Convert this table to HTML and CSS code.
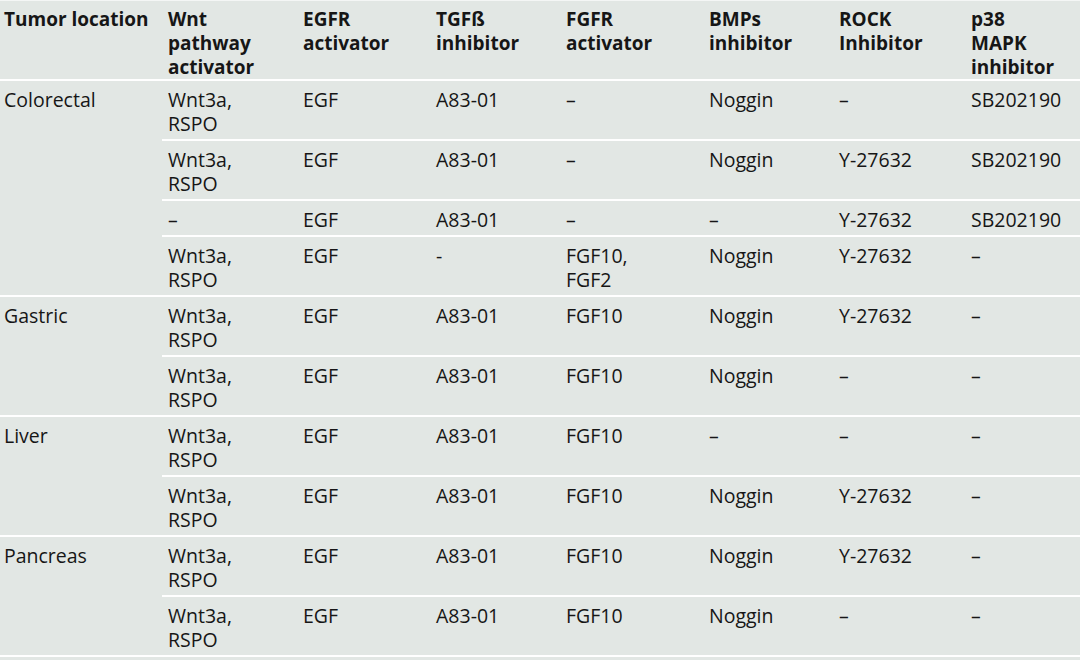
FILE: index.html
```html
<!DOCTYPE html>
<html>
<head>
<meta charset="utf-8">
<link rel="stylesheet" href="styles.css">
</head>
<body>
<table class="grid">
  <colgroup>
    <col class="c1"><col class="c2"><col class="c3"><col class="c4"><col class="c5"><col class="c6"><col class="c7"><col class="c8">
  </colgroup>
  <thead>
    <tr>
      <th class="first">Tumor location</th>
      <th>Wnt<br>pathway<br>activator</th>
      <th>EGFR<br>activator</th>
      <th>TGFß<br>inhibitor</th>
      <th>FGFR<br>activator</th>
      <th>BMPs<br>inhibitor</th>
      <th>ROCK<br>Inhibitor</th>
      <th>p38<br>MAPK<br>inhibitor</th>
    </tr>
  </thead>
  <tbody>
    <tr>
      <td class="first" rowspan="4">Colorectal</td>
      <td>Wnt3a,<br>RSPO</td><td>EGF</td><td>A83-01</td><td>–</td><td>Noggin</td><td>–</td><td>SB202190</td>
    </tr>
    <tr>
      <td>Wnt3a,<br>RSPO</td><td>EGF</td><td>A83-01</td><td>–</td><td>Noggin</td><td>Y-27632</td><td>SB202190</td>
    </tr>
    <tr>
      <td>–</td><td>EGF</td><td>A83-01</td><td>–</td><td>–</td><td>Y-27632</td><td>SB202190</td>
    </tr>
    <tr>
      <td>Wnt3a,<br>RSPO</td><td>EGF</td><td>-</td><td>FGF10,<br>FGF2</td><td>Noggin</td><td>Y-27632</td><td>–</td>
    </tr>
    <tr>
      <td class="first" rowspan="2">Gastric</td>
      <td>Wnt3a,<br>RSPO</td><td>EGF</td><td>A83-01</td><td>FGF10</td><td>Noggin</td><td>Y-27632</td><td>–</td>
    </tr>
    <tr>
      <td>Wnt3a,<br>RSPO</td><td>EGF</td><td>A83-01</td><td>FGF10</td><td>Noggin</td><td>–</td><td>–</td>
    </tr>
    <tr>
      <td class="first" rowspan="2">Liver</td>
      <td>Wnt3a,<br>RSPO</td><td>EGF</td><td>A83-01</td><td>FGF10</td><td>–</td><td>–</td><td>–</td>
    </tr>
    <tr>
      <td>Wnt3a,<br>RSPO</td><td>EGF</td><td>A83-01</td><td>FGF10</td><td>Noggin</td><td>Y-27632</td><td>–</td>
    </tr>
    <tr>
      <td class="first" rowspan="2">Pancreas</td>
      <td>Wnt3a,<br>RSPO</td><td>EGF</td><td>A83-01</td><td>FGF10</td><td>Noggin</td><td>Y-27632</td><td>–</td>
    </tr>
    <tr>
      <td>Wnt3a,<br>RSPO</td><td>EGF</td><td>A83-01</td><td>FGF10</td><td>Noggin</td><td>–</td><td>–</td>
    </tr>
  </tbody>
</table>
</body>
</html>
```
FILE: styles.css
```css
html, body {
  margin: 0;
  padding: 0;
  background: #e2e7e4;
}
body {
  width: 1080px;
  height: 660px;
  overflow: hidden;
  font-family: "Open Sans", "Noto Sans", sans-serif;
  color: #161616;
}
.grid {
  width: 1080px;
  border-collapse: collapse;
  table-layout: fixed;
  border-top: 1px solid #f4f6f5;
}
.c1 { width: 162px; }
.c2 { width: 135px; }
.c3 { width: 133px; }
.c4 { width: 130px; }
.c5 { width: 143px; }
.c6 { width: 130px; }
.c7 { width: 132px; }
.c8 { width: 115px; }
th {
  font-weight: 700;
  font-size: 19px;
  line-height: 24px;
  text-align: left;
  vertical-align: top;
  padding: 6px 4px 0 6px;
  border-bottom: 2px solid #ffffff;
  white-space: nowrap;
}
td {
  font-size: 19.5px;
  line-height: 24px;
  text-align: left;
  vertical-align: top;
  padding: 7px 4px 3px 6px;
  border-bottom: 2px solid #ffffff;
  white-space: nowrap;
}
th.first, td.first {
  padding-left: 4px;
}
```
